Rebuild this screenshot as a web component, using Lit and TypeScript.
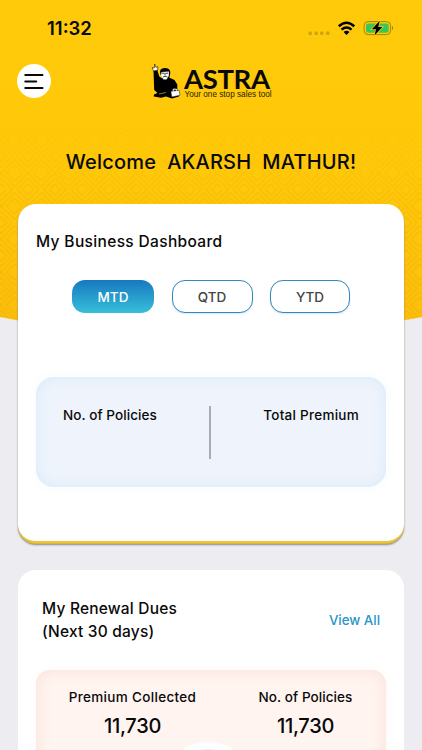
import { LitElement, html, css } from "lit";
import { customElement } from "lit/decorators.js";

@customElement("app-root")
export class AppRoot extends LitElement {
  static styles = css`
    :host { display: block; height: 750px; overflow: hidden; position: relative; background: #edecf1; color: #090909;
      font-family: Inter, "Liberation Sans", sans-serif; font-weight: 500; }
    * { box-sizing: border-box; }
    .backdrop { position: absolute; left: 0; top: 0; display: block; }
    .page { position: relative; display: flex; flex-direction: column; }
    .status { height: 56px; padding: 0 29px 0 47px; display: flex; align-items: center; justify-content: space-between; }
    .time { font-size: 18.5px; font-weight: 600; }
    .signals { display: block; }
    .bar { height: 50px; padding: 8px 17px; display: grid; grid-template-columns: 34px 1fr 34px; }
    .menu { width: 34px; height: 34px; border: 0; padding: 0; border-radius: 50%; background: #fff; }
    .menu svg { display: block; }
    .brand { display: flex; justify-content: center; }
    .brand svg { display: block; margin-top: -2px; overflow: visible; }
    h1, h2, p { margin: 0; font-weight: 500; }
    h1 { height: 98px; padding-top: 43px; text-align: center; font-size: 20px; line-height: 26px; white-space: pre; letter-spacing: .2px; }
    .card { margin: 0 18px; border-radius: 18px; background: #fff; }
    .business { height: 339px; padding: 28px 18px 0; border-bottom: 2px solid #edc52e; box-shadow: 0 1px 0 #d7b449, 0 2px 2px #8a8785; }
    h2 { font-size: 15.5px; line-height: 20px; letter-spacing: .35px; }
    .tabs { display: flex; gap: 17.5px; padding: 28px 0 0 36px; }
    .tab { height: 33px; width: 81px; border: 1.3px solid #3586bb; border-radius: 13px; background: #fff; color: #444; font: 500 13.5px Inter, sans-serif; padding: 0; box-shadow: 0 1px 2px #d8eaf5; }
    .tab:last-child { width: 80px; }
    .tab.active { width: 82px; color: #fff; border: 0; background: linear-gradient(#1679bf, #37bfda); box-shadow: none; }
    .panel { border-radius: 18px; display: grid; }
    .blue { margin-top: 64px; height: 110px; background: #eff4fc; grid-template-columns: 146px 2px 1fr;
      box-shadow: inset 0 0 15px #d9e9fa, 0 0 16px #f7faff; padding: 29px 27px 28px 27px; }
    .label { font-size: 13.5px; line-height: 18px; letter-spacing: .08px; }
    .right { text-align: right; letter-spacing: .27px; }
    .divider { background: #a9adb1; height: 53px; }
    .renewal { height: 220px; margin-top: 27px; padding: 27px 18px 0; }
    .heading { display: flex; justify-content: space-between; padding: 0 6px; }
    .heading h2 { line-height: 23px; letter-spacing: .2px; }
    .link { color: #2795c8; font-size: 13.3px; line-height: 18px; margin-top: 14px; }
    .peach { margin-top: 27px; height: 130px; background: #fff4f0; box-shadow: inset 0 0 16px #fbe0d8, 0 0 16px #fffaf8;
      grid-template-columns: 193px 1fr; padding-top: 18px; text-align: center; border-radius: 14px; position: relative; overflow: hidden; }
    .peach > div:nth-child(2) { padding-right: 4px; }
    .peach .collected { letter-spacing: .32px; }
    .amount { font-size: 20px; line-height: 24px; margin-top: 8px; letter-spacing: -.3px; }
    .dial { position: absolute; width: 90px; height: 90px; left: 127px; top: 72px; border-radius: 50%; border: 7px solid #fff; background: #eee; }
  `;

  render() {
    return html`
      <svg class="backdrop" width="422" height="345" viewBox="0 0 422 345">
        <defs>
          <linearGradient id="gold" x2="0" y2="1"><stop stop-color="#ffca09"/><stop offset=".5" stop-color="#ffc909"/><stop offset="1" stop-color="#fdbd0b"/></linearGradient>
          <linearGradient id="fade" x2="0" y2="1"><stop offset=".3" stop-color="#000"/><stop offset=".62" stop-color="#fff"/></linearGradient>
          <mask id="reveal"><rect width="422" height="345" fill="url(#fade)"/></mask>
          <pattern id="diamonds" width="27" height="33" patternUnits="userSpaceOnUse" patternTransform="translate(14.5 173)">
            <path d="M13.5 11 19 16.5 13.5 22 8 16.5ZM13.5 5.5 24.5 16.5 13.5 27.5 2.5 16.5ZM0 13.5 13.5 0 27 13.5M0 19.5 13.5 33 27 19.5M0 8 8 0M27 8 19 0M0 25 8 33M27 25 19 33" fill="none" stroke="#dda50d" stroke-width="1.3" stroke-opacity=".28"/>
          </pattern>
        </defs>
        <path d="M0 0H422V317Q211 360 0 317Z" fill="url(#gold)"/>
        <path d="M0 0H422V317Q211 360 0 317Z" fill="url(#diamonds)" mask="url(#reveal)"/>
      </svg>
      <main class="page">
        <div class="status"><span class="time">11:32</span>
          <svg class="signals" width="86" height="20" viewBox="307 18 86 20">
            <g fill="#d0a412"><rect x="308.5" y="31.5" width="3.5" height="3.5" rx="1"/><rect x="314.5" y="31.5" width="3.5" height="3.5" rx="1"/><rect x="320" y="31.5" width="3.5" height="3.5" rx="1"/><rect x="326" y="31.5" width="3.5" height="3.5" rx="1"/></g>
            <path d="M338.8 26.2Q346.5 19.3 354.3 26.2M341.5 29.6Q346.5 25.3 351.6 29.6" fill="none" stroke="#000" stroke-width="2.5"/>
            <path d="M343.6 32Q346.5 29.6 349.5 32L346.5 35Z"/>
            <rect x="364.1" y="21.6" width="26.5" height="13" rx="4" fill="none" stroke="#a1850e"/>
            <rect x="366" y="23.5" width="22.7" height="9.3" rx="2.5" fill="#36c75a"/>
            <path d="M392 26v4q1.5-.7 1.5-2t-1.5-2" fill="#a1850e"/>
            <path d="M379.8 20.8 371.8 29.2H376L374.5 35.5 382.3 27H378.2Z" stroke="#ffca09" stroke-width="1.5" paint-order="stroke"/>
          </svg>
        </div>
        <header class="bar">
          <button class="menu" aria-label="Menu"><svg width="34" height="34"><path d="M8.2 11H25.6M8.2 17.5H19.3M8.2 24H25.6" stroke="#090909" stroke-width="1.8" stroke-linecap="round"/></svg></button>
          <div class="brand">
            <svg width="120" height="40" viewBox="151 62 120 40">
              <path d="M153.5 71 157.3 70 159.3 76.5 162 78.2 169 77.5 174.5 80 177.3 84.5 177.3 90 179 96.5 172 98.5 166 96.5 161 97.8 153.7 96.5 154 94.5 157.5 93 154.2 90Z"/>
              <path d="M153.5 71 152.1 67.5 154.3 68 154.7 64 156 67.5 157.7 66.5 157.8 70Z" fill="#fff" stroke="#111" stroke-width=".6"/>
              <path d="M160.3 74Q158.8 68 164.8 68 171 67.7 170.2 74L168.7 80 163 79.5Z"/>
              <path d="M161.5 71.9 168.9 71.5 168.8 76 166.5 79.5H163.5L161 76Z" fill="#fff"/>
              <path d="M162 73.2h2.4m1.3 0h2.3M165 73v2.5M163 77q2-1.3 4.5 0" stroke="#111" stroke-width=".8" fill="none"/>
              <path d="M159 94 166 92.5" stroke="#ffca09" stroke-width=".6"/>
              <path d="M170.8 91.3 179.1 90.3 180 95.3 171.8 97Z" fill="#fff" stroke="#111" stroke-width=".5"/>
              <path d="M173.2 91V89.2H176.5V90.6" fill="none" stroke="#fff"/>
              <text x="184" y="89" textLength="86" font-family="Lato" font-size="27.5" font-weight="700" fill="#090909">ASTRA</text>
              <text x="184.5" y="97.4" font-family="Liberation Sans" font-size="8.2" font-weight="400" fill="#292204">Your one stop sales tool</text>
            </svg>
          </div>
        </header>
        <h1>Welcome  AKARSH  MATHUR!</h1>
        <section class="card business">
          <h2>My Business Dashboard</h2>
          <div class="tabs"><button class="tab active">MTD</button><button class="tab">QTD</button><button class="tab">YTD</button></div>
          <div class="panel blue"><p class="label">No. of Policies</p><i class="divider"></i><p class="label right">Total Premium</p></div>
        </section>
        <section class="card renewal">
          <div class="heading"><h2>My Renewal Dues<br>(Next 30 days)</h2><span class="link">View All</span></div>
          <div class="panel peach">
            <div><p class="label collected">Premium Collected</p><p class="amount">11,730</p></div>
            <div><p class="label">No. of Policies</p><p class="amount">11,730</p></div>
            <i class="dial"></i>
          </div>
        </section>
      </main>`;
  }
}
